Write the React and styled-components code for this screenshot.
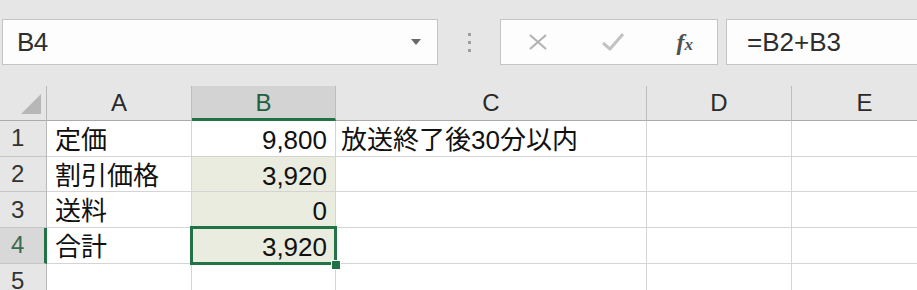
import React from 'react';
import styled, { createGlobalStyle } from 'styled-components';

const GlobalStyle = createGlobalStyle`
	html, body {
		margin: 0;
		padding: 0;
		background: #e6e6e6;
		overflow: hidden;
	}
	body {
		font-family: 'Liberation Sans', 'Noto Sans CJK JP', sans-serif;
	}
`;

const columns = ['A', 'B', 'C', 'D', 'E'];
const colWidths = [47, 145, 144, 311, 145, 146];

const rows = [
	{ a: '定価', b: '9,800', c: '放送終了後30分以内' },
	{ a: '割引価格', b: '3,920', shaded: true },
	{ a: '送料', b: '0', shaded: true },
	{ a: '合計', b: '3,920', shaded: true, active: true },
	{},
];

const App = () => (
	<Page>
		<GlobalStyle />
		<Toolbar>
			<NameBox>
				<NameText>B4</NameText>
				<DropArrow />
			</NameBox>
			<Grip>
				<Dot />
				<Dot />
				<Dot />
			</Grip>
			<ActionBox>
				<ActionIcon>
					<svg width='22' height='22' viewBox='0 0 22 22'>
						<path d='M3 4 L19 18 M19 4 L3 18' stroke='#b3b3b3' strokeWidth='2.2' fill='none' />
					</svg>
				</ActionIcon>
				<ActionIcon>
					<svg width='26' height='22' viewBox='0 0 26 22'>
						<path d='M3 12 L10 18 L23 3' stroke='#c2c2c2' strokeWidth='3' fill='none' strokeLinejoin='round' />
					</svg>
				</ActionIcon>
				<FxIcon>
					f<small>x</small>
				</FxIcon>
			</ActionBox>
			<FormulaBox>=B2+B3</FormulaBox>
		</Toolbar>
		<Sheet>
			<Corner>
				<svg width='20' height='20' viewBox='0 0 20 20'>
					<path d='M20 0 L20 20 L0 20 Z' fill='#b7b7b7' />
				</svg>
			</Corner>
			{columns.map((c) => (
				<ColHeader key={c} $selected={c === 'B'}>
					{c}
				</ColHeader>
			))}
			{rows.map((r, i) => (
				<React.Fragment key={i}>
					<RowHeader $selected={r.active}>{i + 1}</RowHeader>
					<Cell>{r.a}</Cell>
					<Cell $right $shaded={r.shaded} $active={r.active}>
						{r.b}
						{r.active && (
							<>
								<ActiveBorder />
								<FillHandle />
							</>
						)}
					</Cell>
					<Cell $tight>{r.c}</Cell>
					<Cell />
					<Cell />
				</React.Fragment>
			))}
		</Sheet>
	</Page>
);

const Page = styled.div`
	width: 917px;
	height: 290px;
	overflow: hidden;
	background: #e6e6e6;
`;
const Toolbar = styled.div`
	display: flex;
	align-items: stretch;
	height: 46px;
	margin-top: 19px;
	margin-bottom: 21px;
	padding-left: 2px;
`;
const Box = styled.div`
	box-sizing: border-box;
	background: #fdfdfd;
	border: 1px solid #c4c4c4;
	display: flex;
	align-items: center;
`;
const NameBox = styled(Box)`
	width: 436px;
	padding: 0 14px 0 14px;
	justify-content: space-between;
`;
const NameText = styled.span`
	font-size: 26px;
	color: #2e2e2e;
	letter-spacing: -0.5px;
`;
const DropArrow = styled.span`
	width: 0;
	height: 0;
	border-left: 5px solid transparent;
	border-right: 5px solid transparent;
	border-top: 6px solid #6a6a6a;
	margin-right: 2px;
`;
const Grip = styled.div`
	width: 62px;
	display: flex;
	flex-direction: column;
	align-items: center;
	justify-content: center;
	gap: 5px;
`;
const Dot = styled.span`
	width: 3px;
	height: 3px;
	background: #9c9c9c;
`;
const ActionBox = styled(Box)`
	width: 218px;
	padding: 0 24px 0 26px;
	justify-content: space-between;
`;
const ActionIcon = styled.span`
	display: flex;
	align-items: center;
`;
const FxIcon = styled.span`
	font-family: 'Liberation Serif', serif;
	font-style: italic;
	font-weight: bold;
	font-size: 24px;
	color: #505050;
	small {
		font-size: 17px;
	}
`;
const FormulaBox = styled(Box)`
	flex: 1;
	margin-left: 8px;
	border-right: none;
	padding-left: 20px;
	font-size: 26px;
	color: #2e2e2e;
`;
const Sheet = styled.div`
	display: grid;
	grid-template-columns: ${colWidths.map((w) => `${w}px`).join(' ')};
	grid-template-rows: 35px repeat(5, 35.7px);
	background: #ffffff;
`;
const Corner = styled.div`
	background: #e6e6e6;
	border-right: 1px solid #b8b8b8;
	border-bottom: 1px solid #ababab;
	display: flex;
	align-items: flex-end;
	justify-content: flex-end;
	padding: 0 5px 6px 0;
`;
const ColHeader = styled.div`
	box-sizing: border-box;
	background: ${(p) => (p.$selected ? '#d3d3d3' : '#e6e6e6')};
	color: ${(p) => (p.$selected ? '#225e40' : '#2a2a2a')};
	border-right: 1px solid #bdbdbd;
	border-bottom: ${(p) => (p.$selected ? '3px solid #217346' : '1px solid #ababab')};
	display: flex;
	align-items: center;
	justify-content: center;
	font-size: 24px;
	padding-top: ${(p) => (p.$selected ? '2px' : '0')};
`;
const RowHeader = styled.div`
	box-sizing: border-box;
	background: ${(p) => (p.$selected ? '#d8d8d8' : '#e6e6e6')};
	color: ${(p) => (p.$selected ? '#3b6a51' : '#333333')};
	border-right: ${(p) => (p.$selected ? '3px solid #217346' : '1px solid #b8b8b8')};
	border-bottom: 1px solid #c6c6c6;
	display: flex;
	align-items: center;
	padding-left: 11px;
	font-size: 24px;
`;
const Cell = styled.div`
	position: relative;
	z-index: ${(p) => (p.$active ? 2 : 'auto')};
	box-sizing: border-box;
	background: ${(p) => (p.$shaded ? '#e9ecdf' : '#ffffff')};
	border-right: 1px solid #d4d4d4;
	border-bottom: 1px solid #d4d4d4;
	display: flex;
	align-items: center;
	justify-content: ${(p) => (p.$right ? 'flex-end' : 'flex-start')};
	padding: 3px ${(p) => (p.$right ? '8px' : '0')} 0 ${(p) => (p.$tight ? '5px' : '8px')};
	font-size: 26px;
	line-height: 1;
	color: #111111;
	white-space: nowrap;
`;
const ActiveBorder = styled.span`
	position: absolute;
	left: -2px;
	top: -2px;
	right: -2px;
	bottom: -2px;
	border: 3px solid #217346;
	pointer-events: none;
`;
const FillHandle = styled.span`
	position: absolute;
	right: -6px;
	bottom: -7px;
	width: 8px;
	height: 8px;
	background: #217346;
	border: 1px solid #ffffff;
`;

export default App;
